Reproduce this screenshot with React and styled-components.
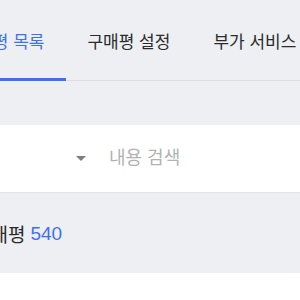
import React from 'react';
import styled, { createGlobalStyle } from 'styled-components';

const GlobalStyle = createGlobalStyle`
  html, body {
    margin: 0;
    padding: 0;
    background: #ffffff;
    overflow: hidden;
  }
  body {
    font-family: "Liberation Sans", "Noto Sans CJK KR", sans-serif;
  }
`;

const Page = styled.div`
  background: #edeff3;
  margin-left: -60px;
  width: 420px;
`;

const TabBar = styled.div`
  display: flex;
  height: 81px;
  box-shadow: inset 0 -1px 0 #dcdde1;
`;

const Tab = styled.div`
  box-sizing: border-box;
  height: 81px;
  padding: 30px 21.5px 0;
  font-size: 17px;
  line-height: 26px;
  white-space: nowrap;
  color: ${(p) => (p.$active ? '#3f6ff4' : '#2b2b2b')};
  border-bottom: 3px solid ${(p) => (p.$active ? '#3f6ff4' : 'transparent')};
`;

const SearchBox = styled.div`
  margin-top: 44px;
  height: 67px;
  background: #ffffff;
  display: flex;
  align-items: center;
  box-shadow: 0 1px 0 #e3e4e8;
`;

const Select = styled.div`
  width: 146px;
  display: flex;
  align-items: center;
  justify-content: flex-end;
`;

const Caret = styled.span`
  width: 0;
  height: 0;
  border-left: 5px solid transparent;
  border-right: 5px solid transparent;
  border-top: 5px solid #7d7d7d;
`;

const SearchInput = styled.input`
  margin-left: 23px;
  border: none;
  outline: none;
  background: transparent;
  font-family: inherit;
  font-size: 18px;
  color: #333;
  width: 200px;
  padding: 0;

  &::placeholder {
    color: #b2b2b2;
  }
`;

const CountRow = styled.div`
  height: 81px;
  display: flex;
  align-items: center;
  padding-left: 33px;
  padding-top: 2px;
  box-sizing: border-box;
  font-size: 19px;
  color: #2b2b2b;
`;

const Count = styled.span`
  color: #3f6ff4;
  margin-left: 5px;
`;

const App = () => {
  return (
    <>
      <GlobalStyle />
      <Page>
        <TabBar>
          <Tab $active>구매평 목록</Tab>
          <Tab>구매평 설정</Tab>
          <Tab>부가 서비스</Tab>
        </TabBar>
        <SearchBox>
          <Select>
            <Caret />
          </Select>
          <SearchInput placeholder="내용 검색" />
        </SearchBox>
        <CountRow>
          구매평<Count>540</Count>
        </CountRow>
      </Page>
    </>
  );
};

export default App;
